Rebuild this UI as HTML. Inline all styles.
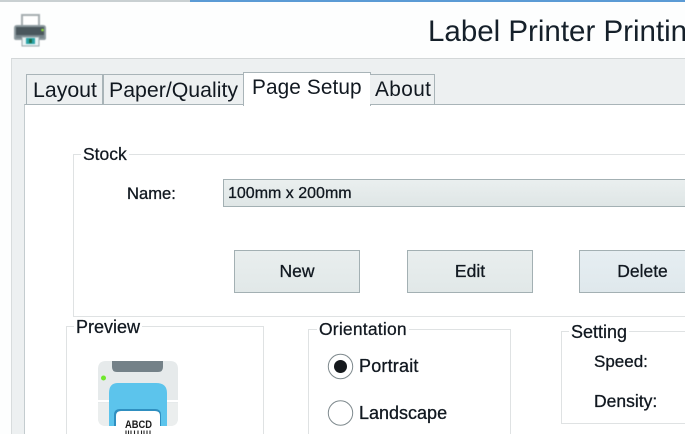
<!DOCTYPE html>
<html><head><meta charset="utf-8"><style>
html,body{margin:0;padding:0;background:#fff;overflow:hidden}
#p{position:relative;width:685px;height:434px;overflow:hidden;background:#fdfefe;font-family:"Liberation Sans",sans-serif;color:#111820}
#p div{position:absolute;box-sizing:border-box}
.t{white-space:nowrap;line-height:1}
.tab{background:#edf0f1;border:1px solid #a9b4b8;border-bottom:none}
.fs{border:1px solid #dfe2e3;background:transparent}
.lg{background:#fff;padding:0 2px;white-space:nowrap;line-height:1;font-size:17.5px;-webkit-text-stroke:.25px #111820}
.btn{border:1px solid #a3b0b3;background:linear-gradient(#e9eeee,#e1e8e8);text-align:center;font-size:17.5px;line-height:41px;-webkit-text-stroke:.3px #111820}
.l{font-size:17.5px;white-space:nowrap;line-height:1;-webkit-text-stroke:.3px #111820}
</style></head><body><div id="p">
<div style="left:0;top:0;width:190px;height:2px;background:#c9d0d2"></div>
<div style="left:190px;top:0;width:495px;height:2px;background:#5b9bd5"></div>

<svg style="position:absolute;left:12px;top:12px;filter:blur(.45px)" width="36" height="36" viewBox="0 0 36 36">
<rect x="10" y="3" width="17" height="12" fill="#fff" stroke="#a5adb0" stroke-width="2"/>
<path d="M5 13 H31 Q34 13 34 16 V26 Q34 28 32 28 H4 Q2 28 2 26 V16 Q2 13 5 13Z" fill="#8d9a9f"/>
<rect x="4" y="15" width="28" height="8" fill="#4a575d"/>
<rect x="4" y="23" width="28" height="3" fill="#75848a"/>
<circle cx="30.500" cy="18" r="1.300" fill="#8fe03a"/>
<rect x="10" y="25" width="17" height="9" fill="#e8f3f4" stroke="#9aa6aa"/>
<rect x="14" y="26" width="9" height="6" fill="#2aa4a8"/>
<rect x="17" y="27" width="3" height="4" fill="#1d6b44"/>
</svg>

<div class="t" style="left:428px;top:17px;font-size:29.500px;color:#15202a">Label Printer Printin</div>

<div style="left:11px;top:58px;width:674px;height:376px;background:#edf0f1;border-top:1px solid #d3d7d8;border-left:1px solid #d8dcdd"></div>
<div style="left:24px;top:104px;width:661px;height:330px;background:#fff;border-top:1px solid #a9b4b8;border-left:1px solid #c4cccf"></div>

<div class="tab" style="left:26px;top:74px;width:77px;height:30px"></div>
<div class="t" style="left:33px;top:80px;font-size:21.300px">Layout</div>
<div class="tab" style="left:103px;top:74px;width:141px;height:30px"></div>
<div class="t" style="left:109px;top:80px;font-size:21.300px">Paper/Quality</div>
<div style="left:243px;top:72px;width:128px;height:34px;background:#fff;border:1px solid #a9b4b8;border-bottom:none"></div>
<div class="t" style="left:252px;top:78px;font-size:20.800px;letter-spacing:.1px">Page Setup</div>
<div class="tab" style="left:370px;top:74px;width:65px;height:30px;border-left:none"></div>
<div class="t" style="left:375px;top:80px;font-size:20.800px;letter-spacing:.4px">About</div>

<div class="fs" style="left:73px;top:154px;width:612px;height:163px;border-right:none"></div>
<div class="lg" style="left:81px;top:146px">Stock</div>
<div class="l" style="left:127px;top:186px;font-size:16.600px">Name:</div>
<div style="left:223px;top:179px;width:462px;height:28px;border:1px solid #a3b0b3;border-right:none;background:linear-gradient(#eaefef,#dfe6e6)"></div>
<div class="t" style="left:228px;top:186px;font-size:16px;-webkit-text-stroke:.3px #111820">100mm x 200mm</div>
<div class="btn" style="left:234px;top:250px;width:126px;height:43px">New</div>
<div class="btn" style="left:407px;top:250px;width:126px;height:43px">Edit</div>
<div class="btn" style="left:579px;top:250px;width:106px;height:43px;border-right:none;padding-left:20px;background:linear-gradient(#e6eef2,#dfe8ec)">Delete</div>

<div class="fs" style="left:66px;top:326px;width:198px;height:108px;border-bottom:none"></div>
<div class="lg" style="left:74px;top:318px;font-size:18px">Preview</div>
<svg style="position:absolute;left:98px;top:361px" width="80" height="73" viewBox="0 0 80 73">
<path d="M8 0 H72 Q80 0 80 8 V57 Q80 65 72 65 H8 Q0 65 0 57 V8 Q0 0 8 0Z" fill="#e6eaeb"/>
<path d="M0 42 H80 V57 Q80 65 72 65 H8 Q0 65 0 57Z" fill="#ebeeee"/>
<path d="M14 0 H65 V6 Q65 11 60 11 H19 Q14 11 14 6Z" fill="#748188"/>
<circle cx="5.500" cy="17" r="2.500" fill="#6fe82c"/>
<path d="M20 22 H58 Q69 22 69 32 V65 H11 V32 Q11 22 20 22Z" fill="#5cc4ec"/>
<rect x="0" y="39" width="11" height="2" fill="#fff"/><rect x="69" y="39" width="11" height="2" fill="#fff"/>
<path d="M16 65 V54 Q16 48 22 48 H57 Q63 48 63 54 V65Z" fill="#2f8fc0"/>
<path d="M18 73 V55 Q18 50 23 50 H57 Q62 50 62 55 V73Z" fill="#fff"/>
<text x="27" y="67" font-family="Liberation Sans" font-size="11" font-weight="bold" textLength="27" lengthAdjust="spacingAndGlyphs" fill="#1a1a1a">ABCD</text>
<path d="M28 69.500V73M30.500 69.500V73M33 69.500V73M36.500 69.500V73M40 69.500V73M43.500 69.500V73M46 69.500V73M49 69.500V73M52 69.500V73" stroke="#222" stroke-width="1.100"/>
</svg>

<div class="fs" style="left:308px;top:329px;width:203px;height:105px;border-bottom:none"></div>
<div class="lg" style="left:317px;top:321px;letter-spacing:.2px">Orientation</div>
<svg style="position:absolute;left:326px;top:352px" width="30" height="74" viewBox="0 0 30 74">
<circle cx="14.500" cy="14.500" r="12.200" fill="#fff" stroke="#7f8a8e"/>
<circle cx="14.500" cy="14.500" r="6.500" fill="#15191d"/>
<circle cx="14.500" cy="61" r="12.200" fill="#fff" stroke="#7f8a8e"/>
</svg>
<div class="l" style="left:359px;top:357px;font-size:18px;letter-spacing:.2px">Portrait</div>
<div class="l" style="left:359px;top:404px;font-size:18px">Landscape</div>

<div class="fs" style="left:561px;top:331px;width:124px;height:93px;border-right:none"></div>
<div class="lg" style="left:569px;top:323px;font-size:18px">Setting</div>
<div class="l" style="left:594px;top:353px;font-size:17px">Speed:</div>
<div class="l" style="left:594px;top:393px">Density:</div>
</div></body></html>
